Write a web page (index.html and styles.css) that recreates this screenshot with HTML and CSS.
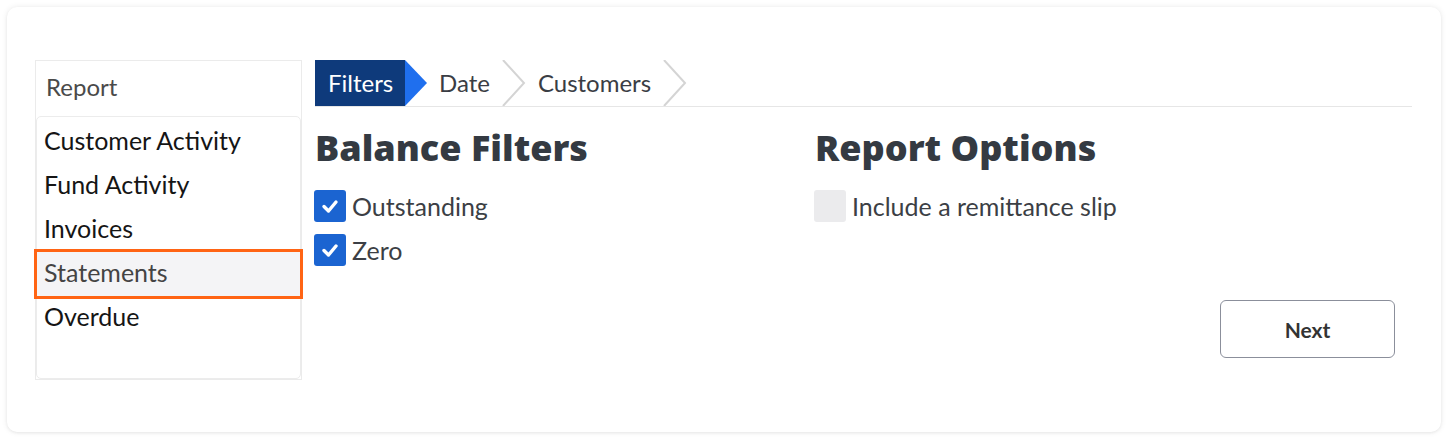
FILE: index.html
```html
<!DOCTYPE html>
<html>
<head>
<meta charset="utf-8">
<link rel="stylesheet" href="styles.css">
</head>
<body>
<div class="card">
  <aside class="sidebar">
    <div class="side-head">Report</div>
    <ul class="side-list">
      <li class="side-item">Customer Activity</li>
      <li class="side-item">Fund Activity</li>
      <li class="side-item">Invoices</li>
      <li class="side-item selected">Statements</li>
      <li class="side-item">Overdue</li>
    </ul>
  </aside>
  <main class="main">
    <nav class="steps">
      <div class="step active">Filters<span class="tip"></span></div>
      <div class="step">Date<svg class="chev" width="24" height="46" viewBox="0 0 24 46"><polyline points="1,0 22,23 1,46" fill="none" stroke="#d4d4d4" stroke-width="2"/></svg></div>
      <div class="step">Customers<svg class="chev" width="24" height="46" viewBox="0 0 24 46"><polyline points="1,0 22,23 1,46" fill="none" stroke="#d4d4d4" stroke-width="2"/></svg></div>
    </nav>
    <div class="cols">
      <section class="col">
        <h2 class="heading">Balance Filters</h2>
        <label class="check-row"><span class="box checked"><svg width="20" height="20" viewBox="0 0 20 20"><polyline points="4,10.5 8.5,15 16,6" fill="none" stroke="#fff" stroke-width="3.4" stroke-linecap="round" stroke-linejoin="round"/></svg></span>Outstanding</label>
        <label class="check-row"><span class="box checked"><svg width="20" height="20" viewBox="0 0 20 20"><polyline points="4,10.5 8.5,15 16,6" fill="none" stroke="#fff" stroke-width="3.4" stroke-linecap="round" stroke-linejoin="round"/></svg></span>Zero</label>
      </section>
      <section class="col">
        <h2 class="heading">Report Options</h2>
        <label class="check-row"><span class="box"></span>Include a remittance slip</label>
      </section>
    </div>
    <div class="actions">
      <button class="btn">Next</button>
    </div>
  </main>
</div>
</body>
</html>
```
FILE: styles.css
```css
* { box-sizing: border-box; }
html, body { margin: 0; padding: 0; background: #ffffff; }
body {
  font-family: "Lato", "Open Sans", sans-serif;
  color: #151515;
}
.card {
  margin: 7px;
  width: 1434px;
  height: 425px;
  background: #fff;
  border-radius: 10px;
  box-shadow: 0 0 6px rgba(0,0,0,0.08), 0 1px 3px rgba(0,0,0,0.06);
  padding: 53px 29px 0 28px;
  display: flex;
  gap: 13px;
}
.sidebar {
  width: 267px;
  height: 320px;
  border: 1px solid #ebebeb;
  display: flex;
  flex-direction: column;
}
.side-head {
  height: 55px;
  padding-left: 10px;
  padding-bottom: 4px;
  display: flex;
  align-items: center;
  font-size: 24px;
  color: #4a4a4a;
}
.side-list {
  list-style: none;
  margin: 0;
  padding: 3px 0 0 0;
  flex: 1;
  border: 1px solid #ececec;
  border-radius: 5px;
}
.side-item {
  height: 44px;
  display: flex;
  align-items: center;
  padding-left: 7px;
  padding-bottom: 4px;
  font-size: 25px;
  color: #151515;
}
.side-item.selected {
  background: #f4f4f6;
  color: #444;
  outline: 3px solid #ff6414;
  outline-offset: 0;
}
.main {
  flex: 1;
  display: flex;
  flex-direction: column;
}
.steps {
  display: flex;
  height: 47px;
  border-bottom: 1px solid #e6e6e6;
}
.step {
  display: flex;
  align-items: center;
  height: 46px;
  font-size: 24px;
  color: #3a3d44;
  gap: 12px;
  margin-right: 12px;
  padding-bottom: 2px;
}
.step.active {
  background: #0e3a7b;
  color: #fff;
  padding-left: 13px;
  position: relative;
  width: 90px;
  margin-right: 34px;
}
.tip {
  position: absolute;
  left: 90px;
  top: 0;
  width: 0;
  height: 0;
  border-top: 23px solid transparent;
  border-bottom: 23px solid transparent;
  border-left: 22px solid #1f6fee;
}
.chev { display: block; margin-top: 2px; }
.cols {
  display: flex;
  padding-top: 19px;
}
.col {
  width: 500px;
  padding-left: 0;
}
.heading {
  margin: 0 0 15px 0;
  font-family: "Open Sans", sans-serif;
  font-size: 36px;
  font-weight: 800;
  line-height: 44px;
  color: #343a42;
}
.check-row {
  display: flex;
  align-items: center;
  gap: 6px;
  height: 44px;
  padding-bottom: 2px;
  font-size: 25px;
  color: #3c3f45;
  margin-left: -1px;
}
.box {
  width: 32px;
  height: 32px;
  border-radius: 3px;
  background: #ebebed;
  display: flex;
  align-items: center;
  justify-content: center;
}
.box.checked { background: #1b64d1; }
.actions {
  display: flex;
  justify-content: flex-end;
  padding-right: 17px;
  margin-top: 27px;
}
.btn {
  width: 175px;
  height: 58px;
  border: 1px solid #8b8f9b;
  border-radius: 6px;
  background: #fff;
  font-family: "Lato", sans-serif;
  font-weight: 700;
  font-size: 21px;
  color: #333;
}
```
